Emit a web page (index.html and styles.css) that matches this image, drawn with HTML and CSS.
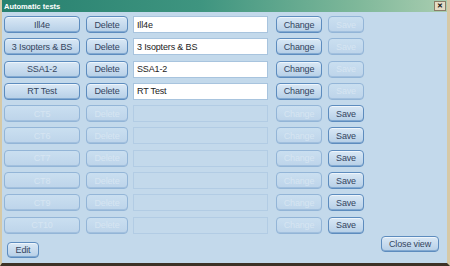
FILE: index.html
```html
<!DOCTYPE html>
<html lang="en">
<head>
    <meta charset="UTF-8">
    <title>Automatic tests</title>
    <link rel="stylesheet" href="styles.css">
</head>
<body>
    <div class="window">
        <div class="titlebar">
            <span class="title">Automatic tests</span>
            <span class="close-x">&#x2715;</span>
        </div>

        <div class="rows">
            <div class="row">
                <button class="btn name">Ill4e</button>
                <button class="btn del">Delete</button>
                <input class="field" type="text" value="Ill4e">
                <button class="btn change">Change</button>
                <button class="btn save" disabled>Save</button>
            </div>
            <div class="row">
                <button class="btn name">3 Isopters &amp; BS</button>
                <button class="btn del">Delete</button>
                <input class="field" type="text" value="3 Isopters &amp; BS">
                <button class="btn change">Change</button>
                <button class="btn save" disabled>Save</button>
            </div>
            <div class="row">
                <button class="btn name">SSA1-2</button>
                <button class="btn del">Delete</button>
                <input class="field" type="text" value="SSA1-2">
                <button class="btn change">Change</button>
                <button class="btn save" disabled>Save</button>
            </div>
            <div class="row">
                <button class="btn name">RT Test</button>
                <button class="btn del">Delete</button>
                <input class="field" type="text" value="RT Test">
                <button class="btn change">Change</button>
                <button class="btn save" disabled>Save</button>
            </div>
            <div class="row">
                <button class="btn name" disabled>CT5</button>
                <button class="btn del" disabled>Delete</button>
                <input class="field" type="text" disabled>
                <button class="btn change" disabled>Change</button>
                <button class="btn save">Save</button>
            </div>
            <div class="row">
                <button class="btn name" disabled>CT6</button>
                <button class="btn del" disabled>Delete</button>
                <input class="field" type="text" disabled>
                <button class="btn change" disabled>Change</button>
                <button class="btn save">Save</button>
            </div>
            <div class="row">
                <button class="btn name" disabled>CT7</button>
                <button class="btn del" disabled>Delete</button>
                <input class="field" type="text" disabled>
                <button class="btn change" disabled>Change</button>
                <button class="btn save">Save</button>
            </div>
            <div class="row">
                <button class="btn name" disabled>CT8</button>
                <button class="btn del" disabled>Delete</button>
                <input class="field" type="text" disabled>
                <button class="btn change" disabled>Change</button>
                <button class="btn save">Save</button>
            </div>
            <div class="row">
                <button class="btn name" disabled>CT9</button>
                <button class="btn del" disabled>Delete</button>
                <input class="field" type="text" disabled>
                <button class="btn change" disabled>Change</button>
                <button class="btn save">Save</button>
            </div>
            <div class="row">
                <button class="btn name" disabled>CT10</button>
                <button class="btn del" disabled>Delete</button>
                <input class="field" type="text" disabled>
                <button class="btn change" disabled>Change</button>
                <button class="btn save">Save</button>
            </div>
        </div>

        <div class="footer">
            <button class="btn edit">Edit</button>
            <button class="btn close-view">Close view</button>
        </div>
    </div>
</body>
</html>
```

FILE: styles.css
```css
body { margin: 0; background: #3d3226; font-family: "Liberation Sans", Arial, sans-serif; }
.window { width: 450px; height: 266px; box-sizing: border-box; background: #c3d9eb; border-left: 2px solid #d6c9a6; border-right: 3px solid #d6c9a6; border-bottom: 3px solid #3d3226; display: flex; flex-direction: column; }
.titlebar { height: 12px; display: flex; align-items: center; justify-content: space-between; background: linear-gradient(to right, #27806f, #3f9580 45%, #7fb89a 80%, #a9cdb0); padding: 0 1px 0 2px; }
.title { color: #fff; font-size: 7.5px; font-weight: bold; }
.close-x { width: 10px; height: 8px; line-height: 8px; font-size: 7px; font-weight: bold; text-align: center; color: #111; background: #e4dcc4; border: 1px solid #8a7e68; }
.rows { display: flex; flex-direction: column; gap: 5.3px; padding: 4px 0 0 2px; }
.row { display: flex; height: 17px; }
.btn { height: 17px; padding: 0; white-space: nowrap; font-family: "Liberation Sans", Arial, sans-serif; font-size: 9px; letter-spacing: -0.15px; color: #34455e; border: 1px solid #5d8cbe; border-radius: 4px; background: linear-gradient(#d9e8f5, #c4d9ed 60%, #b6cfe6); box-shadow: inset 0 -1px 0 #82a9d1, inset 0 1px 0 #eef5fb; }
.btn:disabled { color: #d6e5f2; border-color: #93b5d7; background: linear-gradient(#cadff0, #bdd4ea); box-shadow: inset 0 -1px 0 #a2c0de; }
.name { width: 76px; }
.del { width: 42px; margin-left: 6px; }
.field { width: 135px; height: 17px; box-sizing: border-box; margin-left: 5px; padding: 0 3px; font-family: "Liberation Sans", Arial, sans-serif; font-size: 9px; letter-spacing: -0.15px; color: #222; background: #fff; border: 1px solid #a8c4de; }
.field:disabled { background: #c3d9eb; border-color: #b2cce4; }
.change { width: 46px; margin-left: 8px; }
.save { width: 36px; margin-left: 6px; }
.footer { display: flex; justify-content: space-between; padding: 0 8px 0 5px; }
.edit { width: 32px; height: 16px; margin-top: 8px; }
.close-view { width: 58px; height: 16px; margin-top: 2px; }
```
